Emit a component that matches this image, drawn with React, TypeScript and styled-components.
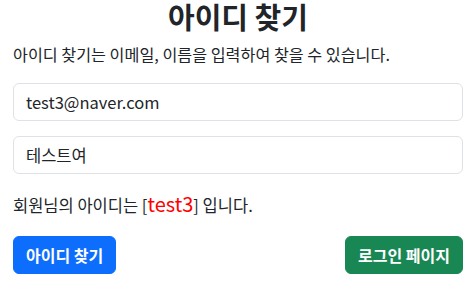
import React from "react";
import styled, { createGlobalStyle } from "styled-components";

const Global = createGlobalStyle`
  html, body { margin: 0; padding: 0; background: #fff; }
  body {
    font-family: "Noto Sans CJK KR", "Noto Sans", sans-serif;
    color: #212529;
    font-size: 16px;
  }
  * { box-sizing: border-box; }
`;

const Container = styled.div`
  padding: 0 13px;
  display: flex;
  flex-direction: column;
`;

const Title = styled.h1`
  margin: 0;
  font-size: 29px;
  font-weight: 700;
  line-height: 33px;
  text-align: center;
`;

const Desc = styled.p`
  margin: 9px 0 17px;
  font-size: 16.2px;
  line-height: 24px;
`;

const Fields = styled.div`
  display: flex;
  flex-direction: column;
  gap: 15px;
`;

const Input = styled.input`
  display: block;
  width: 100%;
  height: 38px;
  padding: 6px 12px;
  font-family: inherit;
  font-size: 16.5px;
  color: #212529;
  border: 1px solid #dee2e6;
  border-radius: 6px;
  outline: none;
`;

const Result = styled.p`
  margin: 19px 0 19px;
  font-size: 16.5px;
  line-height: 24px;
`;

const Found = styled.span`
  color: #ff0000;
  font-size: 20px;
  line-height: 20px;
`;

const Actions = styled.div`
  display: flex;
  justify-content: space-between;
`;

const Button = styled.button<{ $variant: "primary" | "success" }>`
  height: 38px;
  padding: 0 12px;
  border: 1px solid ${(p) => (p.$variant === "primary" ? "#0d6efd" : "#198754")};
  background: ${(p) => (p.$variant === "primary" ? "#0d6efd" : "#198754")};
  color: #fff;
  font-family: inherit;
  font-size: 16px;
  font-weight: 700;
  border-radius: 6px;
`;

export default function App() {
  return (
    <>
      <Global />
      <Container>
        <Title>아이디 찾기</Title>
        <Desc>아이디 찾기는 이메일, 이름을 입력하여 찾을 수 있습니다.</Desc>
        <Fields>
          <Input defaultValue="test3@naver.com" />
          <Input defaultValue="테스트여" />
        </Fields>
        <Result>
          회원님의 아이디는 [<Found>test3</Found>] 입니다.
        </Result>
        <Actions>
          <Button $variant="primary">아이디 찾기</Button>
          <Button $variant="success">로그인 페이지</Button>
        </Actions>
      </Container>
    </>
  );
}
